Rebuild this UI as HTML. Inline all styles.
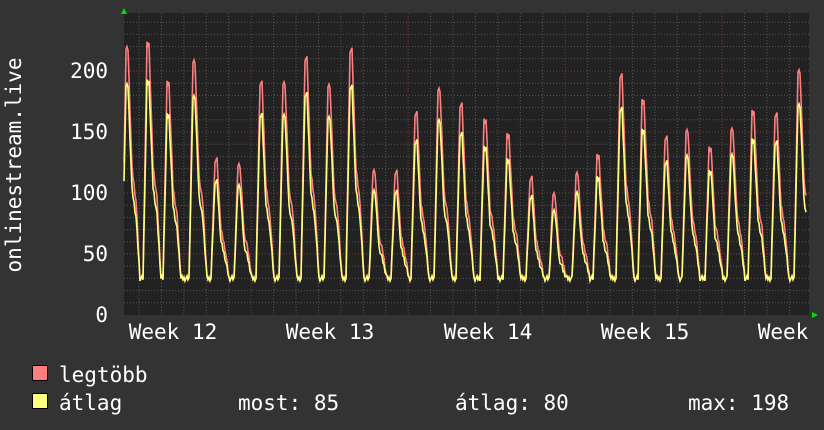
<!DOCTYPE html>
<html><head><meta charset="utf-8"><style>
body{margin:0;background:#333;width:824px;height:430px;overflow:hidden;font-family:"DejaVu Sans Mono","Liberation Mono",monospace;color:#fff}
svg{position:absolute;left:0;top:0}
</style></head><body>
<svg width="824" height="430" xmlns="http://www.w3.org/2000/svg" font-family="DejaVu Sans Mono, Liberation Mono, monospace" font-size="21" fill="#fff">
<rect x="0" y="0" width="824" height="430" fill="#333"/>
<rect x="124" y="13" width="685" height="302" fill="#222"/>
<g id="grid"></g>
<g id="data"></g>
<polygon points="121,14 127,14 124,8" fill="#0d0"/>
<polygon points="812,312 812,318 818,315" fill="#0d0"/>
<g text-anchor="end">
<text x="108" y="78">200</text><text x="108" y="139">150</text><text x="108" y="200">100</text><text x="108" y="261">50</text><text x="108" y="322">0</text>
</g>
<text transform="translate(21,165) rotate(-90)" text-anchor="middle">onlinestream.live</text>
<g text-anchor="middle">
<text x="173" y="339">Week 12</text><text x="330" y="339">Week 13</text><text x="488" y="339">Week 14</text><text x="645" y="339">Week 15</text><text x="783" y="339">Week</text>
</g>
<rect x="32.5" y="365.5" width="15" height="15" fill="#ff7f7f" stroke="#000"/>
<rect x="32.5" y="393.5" width="15" height="15" fill="#ffff7f" stroke="#000"/>
<text x="59" y="382">legtöbb</text>
<text x="59" y="410">átlag</text>
<text x="238" y="410">most: 85</text>
<text x="455" y="410">átlag: 80</text>
<text x="688" y="410">max: 198</text>
</svg>
<script>
var g=document.getElementById('grid'),d=document.getElementById('data'),s='';
function Y(v){return 315-v*1.22;}
for(var v=10;v<=240;v+=10){var y=Y(v);var maj=v%50==0;s+='<line x1="124" x2="809" y1="'+y+'" y2="'+y+'" stroke="'+(maj?'#7a3a3a':'#555')+'" stroke-dasharray="1,2"/>';}
for(var x=139;x<809;x+=22.43){var wk=Math.abs(((x-251)%157+157)%157)<3||Math.abs(((x-251)%157+157)%157)>154;s+='<line y1="13" y2="315" x1="'+x+'" x2="'+x+'" stroke="'+(wk?'#7a3a3a':'#555')+'" stroke-dasharray="1,2"/>';}
g.innerHTML=s;
var pk=[[126,218],[147,222],[167,190],[193,208],[215,127],[238,123],[260,190],[283,190],[305,210],[328,188],[350,217],[373,118],[395,117],[415,165],[438,185],[460,172],[484,160],[507,147],[530,112],[553,99],[576,115],[597,130],[620,196],[642,175],[665,145],[686,150],[709,137],[731,151],[752,166],[775,164],[798,200]];
function val(x,f){var best=30;for(var i=0;i<pk.length;i++){var t=x-pk[i][0],p=pk[i][1]*f,v=null;
if(t>=-4&&t<0)v=30+(p-30)*(1+t/4);else if(t>=0&&t<2)v=p;else if(t>=2&&t<6)v=p-(p*0.45)*(t-2)/4;else if(t>=6&&t<10)v=p*0.55-(p*0.12)*(t-6)/4;else if(t>=10&&t<14)v=p*0.43-(p*0.43-30)*(t-10)/4;
if(v!==null&&v>best)best=v;}return best+((x*7)%5)-2;}
function line(f,c){var pts=[];for(var x=124;x<=806;x++)pts.push(x+','+Y(val(x,f)).toFixed(1));return '<polyline fill="none" stroke="'+c+'" stroke-width="1.6" points="'+pts.join(' ')+'"/>';}
d.innerHTML=line(1,'#ff7f7f')+line(0.86,'#ffff7f');
</script>
</body></html>
